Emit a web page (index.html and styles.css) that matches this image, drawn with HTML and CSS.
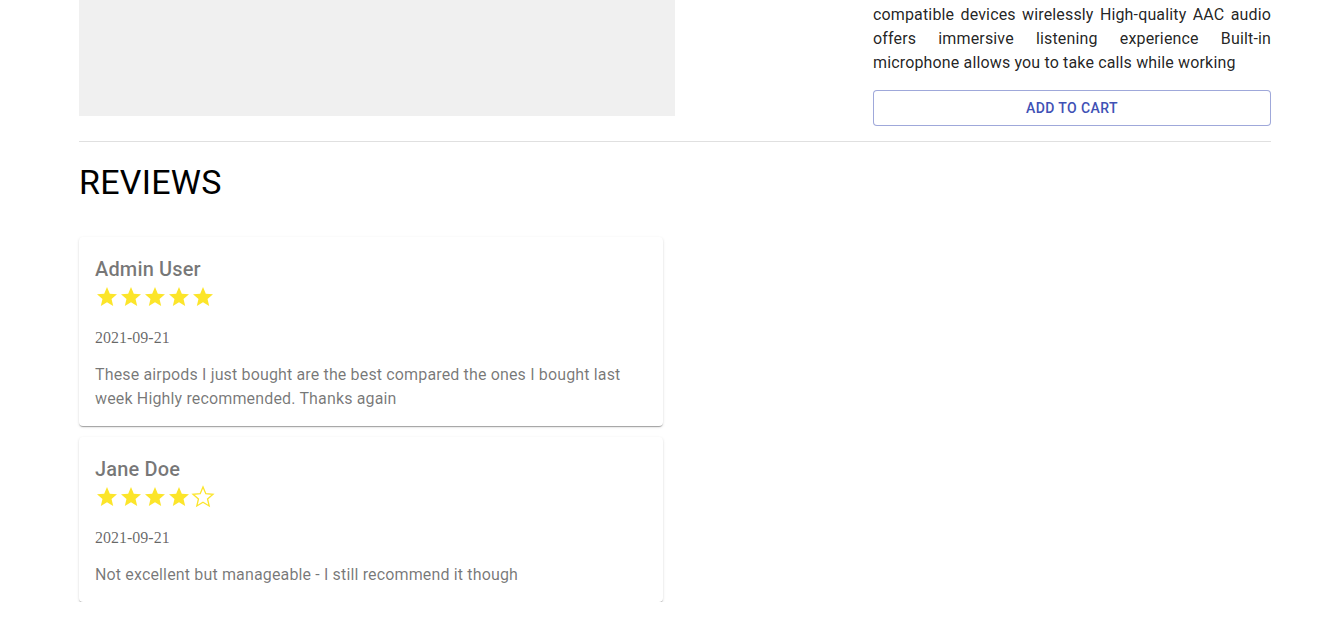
FILE: index.html
```html
<!DOCTYPE html>
<html lang="en">
<head>
<meta charset="utf-8">
<title>Product</title>
<link rel="stylesheet" href="styles.css">
</head>
<body>
<main class="container">
  <section class="product">
    <div class="product-image"></div>
    <div class="product-spacer"></div>
    <div class="product-info">
      <p class="description">compatible devices wirelessly High-quality AAC audio offers immersive listening experience Built-in microphone allows you to take calls while working</p>
      <button class="btn-outline">Add to cart</button>
    </div>
  </section>
  <hr class="divider">
  <h2 class="reviews-title">REVIEWS</h2>
  <div class="reviews">
    <article class="review-card">
      <h3 class="review-name">Admin User</h3>
      <div class="stars">
        <svg class="star" viewBox="0 0 24 24"><path d="M12 17.27L18.18 21l-1.64-7.03L22 9.24l-7.19-.61L12 2 9.19 8.63 2 9.24l5.46 4.73L5.82 21z"/></svg>
        <svg class="star" viewBox="0 0 24 24"><path d="M12 17.27L18.18 21l-1.64-7.03L22 9.24l-7.19-.61L12 2 9.19 8.63 2 9.24l5.46 4.73L5.82 21z"/></svg>
        <svg class="star" viewBox="0 0 24 24"><path d="M12 17.27L18.18 21l-1.64-7.03L22 9.24l-7.19-.61L12 2 9.19 8.63 2 9.24l5.46 4.73L5.82 21z"/></svg>
        <svg class="star" viewBox="0 0 24 24"><path d="M12 17.27L18.18 21l-1.64-7.03L22 9.24l-7.19-.61L12 2 9.19 8.63 2 9.24l5.46 4.73L5.82 21z"/></svg>
        <svg class="star" viewBox="0 0 24 24"><path d="M12 17.27L18.18 21l-1.64-7.03L22 9.24l-7.19-.61L12 2 9.19 8.63 2 9.24l5.46 4.73L5.82 21z"/></svg>
      </div>
      <p class="review-date">2021-09-21</p>
      <p class="review-text">These airpods I just bought are the best compared the ones I bought last week Highly recommended. Thanks again</p>
    </article>
    <article class="review-card">
      <h3 class="review-name">Jane Doe</h3>
      <div class="stars">
        <svg class="star" viewBox="0 0 24 24"><path d="M12 17.27L18.18 21l-1.64-7.03L22 9.24l-7.19-.61L12 2 9.19 8.63 2 9.24l5.46 4.73L5.82 21z"/></svg>
        <svg class="star" viewBox="0 0 24 24"><path d="M12 17.27L18.18 21l-1.64-7.03L22 9.24l-7.19-.61L12 2 9.19 8.63 2 9.24l5.46 4.73L5.82 21z"/></svg>
        <svg class="star" viewBox="0 0 24 24"><path d="M12 17.27L18.18 21l-1.64-7.03L22 9.24l-7.19-.61L12 2 9.19 8.63 2 9.24l5.46 4.73L5.82 21z"/></svg>
        <svg class="star" viewBox="0 0 24 24"><path d="M12 17.27L18.18 21l-1.64-7.03L22 9.24l-7.19-.61L12 2 9.19 8.63 2 9.24l5.46 4.73L5.82 21z"/></svg>
        <svg class="star star-empty" viewBox="0 0 24 24"><path d="M12 17.27L18.18 21l-1.64-7.03L22 9.24l-7.19-.61L12 2 9.19 8.63 2 9.24l5.46 4.73L5.82 21z"/></svg>
      </div>
      <p class="review-date">2021-09-21</p>
      <p class="review-text">Not excellent but manageable - I still recommend it though</p>
    </article>
  </div>
</main>
</body>
</html>
```

FILE: styles.css
```css
* { box-sizing: border-box; }

body {
  margin: 0;
  background: #fff;
  font-family: Roboto, "Liberation Sans", Arial, sans-serif;
  color: #000;
}

.container {
  width: 1192px;
  margin-left: 79px;
}

.product {
  display: grid;
  grid-template-columns: 596px 198px 398px;
  align-items: start;
}

.product-image {
  height: 116px;
  background: #f0f0f0;
}

.product-info {
  padding-top: 3px;
}

.description {
  margin: 0;
  font-size: 16px;
  line-height: 24px;
  text-align: justify;
  color: rgba(0, 0, 0, 0.87);
  letter-spacing: 0.00938em;
}

.btn-outline {
  display: block;
  width: 100%;
  height: 36px;
  margin-top: 15px;
  padding: 5px 15px;
  background: #fff;
  border: 1px solid rgba(63, 81, 181, 0.5);
  border-radius: 4px;
  color: #3f51b5;
  font-family: Roboto, "Liberation Sans", Arial, sans-serif;
  font-size: 14px;
  font-weight: 500;
  letter-spacing: 0.02857em;
  text-transform: uppercase;
  cursor: pointer;
}

.divider {
  margin: 15px 0 0;
  border: none;
  height: 1px;
  background: rgba(0, 0, 0, 0.12);
}

.reviews-title {
  margin: 19px 0 0;
  font-size: 34px;
  font-weight: 400;
  line-height: 42px;
  letter-spacing: 0.00735em;
}

.reviews {
  margin-top: 34px;
  width: 584px;
  display: flex;
  flex-direction: column;
  gap: 11px;
}

.review-card {
  background: #fff;
  border-radius: 4px;
  padding: 16px 16px 15px;
  box-shadow: 0px 2px 1px -1px rgba(0,0,0,0.2), 0px 1px 1px 0px rgba(0,0,0,0.14), 0px 1px 3px 0px rgba(0,0,0,0.12);
}

.review-name {
  margin: 0;
  font-size: 20px;
  font-weight: 500;
  line-height: 32px;
  letter-spacing: 0.0075em;
  color: rgba(0, 0, 0, 0.54);
}

.stars {
  display: flex;
  height: 24px;
}

.star {
  width: 24px;
  height: 24px;
  fill: #fce52a;
}

.star-empty {
  fill: none;
  stroke: #fce52a;
  stroke-width: 1.3;
}

.review-date {
  margin: 17px 0 13px;
  font-family: "Liberation Serif", "Times New Roman", serif;
  font-size: 16px;
  line-height: 24px;
  color: rgba(0, 0, 0, 0.6);
}

.review-text {
  margin: 0;
  font-size: 16px;
  line-height: 24px;
  letter-spacing: 0.00938em;
  color: rgba(0, 0, 0, 0.54);
}
```
